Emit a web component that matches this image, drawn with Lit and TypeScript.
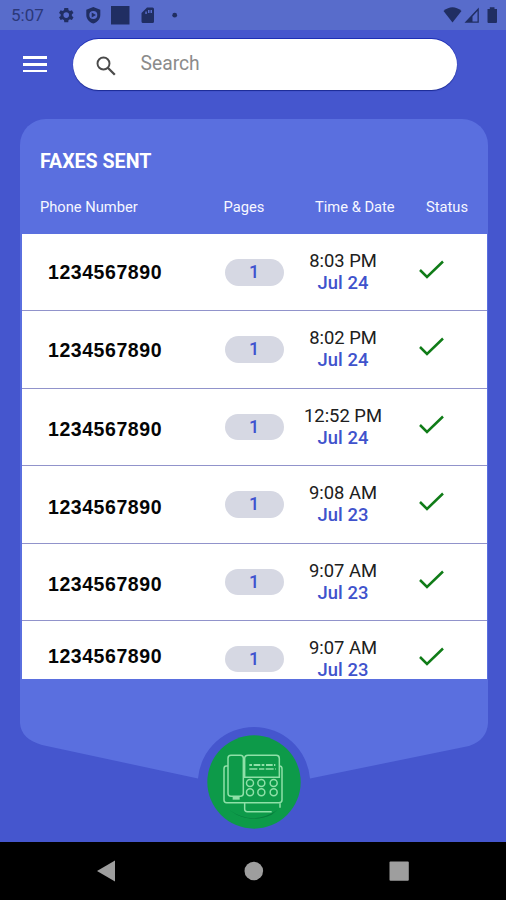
import { LitElement, html, css } from "lit";
import { customElement, property } from "lit/decorators.js";

interface Fax {
  phone: string;
  pages: number;
  time: string;
  date: string;
  shift: number;
}

const FAXES: Fax[] = [
  { phone: "1234567890", pages: 1, time: "8:03 PM", date: "Jul 24", shift: -0.5 },
  { phone: "1234567890", pages: 1, time: "8:02 PM", date: "Jul 24", shift: 0.5 },
  { phone: "1234567890", pages: 1, time: "12:52 PM", date: "Jul 24", shift: 1.5 },
  { phone: "1234567890", pages: 1, time: "9:08 AM", date: "Jul 23", shift: 2.5 },
  { phone: "1234567890", pages: 1, time: "9:07 AM", date: "Jul 23", shift: 2.2 },
  { phone: "1234567890", pages: 1, time: "9:07 AM", date: "Jul 23", shift: -3 },
];

@customElement("fax-row")
class FaxRow extends LitElement {
  @property({ attribute: false }) fax!: Fax;

  static styles = css`
    :host {
      display: grid;
      grid-template-columns: 203px 60px 116px 1fr;
      height: 77.4px;
      flex: none;
      box-sizing: border-box;
      border-bottom: 1.5px solid #9193cb;
      background: #fff;
      font-family: Roboto, sans-serif;
    }
    .phone {
      padding: 27px 0 0 26.5px;
      font: bold 19.5px/22px "Liberation Sans", sans-serif;
      letter-spacing: 0.56px;
      color: #050505;
    }
    .pill {
      margin-top: 25px;
      height: 26.5px;
      width: 59px;
      border-radius: 14px;
      background: #d6d8e3;
      color: #4052cf;
      font-weight: 500;
      font-size: 18px;
      line-height: 26px;
      text-align: center;
    }
    .when {
      padding: 16px 0 0 1px;
      text-align: center;
      font-size: 18.4px;
      line-height: 22px;
      color: #202020;
    }
    .date {
      color: #4052cc;
      font-weight: 500;
      letter-spacing: 0.1px;
    }
    .check {
      display: block;
      margin: 26px 0 0 17.5px;
    }
  `;

  render() {
    return html`
      <div class="phone" style="transform: translateY(${this.fax.shift}px)">${this.fax.phone}</div>
      <div class="pill">${this.fax.pages}</div>
      <div class="when">
        <div>${this.fax.time}</div>
        <div class="date">${this.fax.date}</div>
      </div>
      <svg class="check" width="28" height="20" viewBox="0 0 28 20" fill="none">
        <path d="M2 10L9 17L25 1.500" stroke="#107c18" stroke-width="2.500" />
      </svg>
    `;
  }
}

@customElement("app-root")
class AppRoot extends LitElement {
  static styles = css`
    :host {
      display: flex;
      flex-direction: column;
      width: 506px;
      height: 900px;
      overflow: hidden;
      background: #4556ce;
      font-family: Roboto, sans-serif;
      color: #fff;
    }
    .status {
      display: flex;
      align-items: center;
      height: 30px;
      flex: none;
      background: #586ccb;
      color: #2b3879;
    }
    .clock {
      width: 46px;
      padding-left: 11px;
      font-size: 17px;
      line-height: 31px;
    }
    .status svg {
      display: block;
    }
    .top {
      display: flex;
      height: 89px;
      flex: none;
    }
    .menu {
      display: flex;
      flex-direction: column;
      gap: 4px;
      margin: 26px 26px 0 23px;
      width: 23.5px;
    }
    .menu i {
      height: 2.8px;
      background: #fff;
    }
    .search {
      display: flex;
      box-sizing: border-box;
      margin-top: 9px;
      width: 384px;
      height: 51px;
      border-radius: 26px;
      background: #fff;
      box-shadow: 0 -1px 0.5px #1d2eb5, 0 1px 1px #1a2a94;
    }
    .search svg {
      margin: 17px 0 0 23px;
      flex: none;
    }
    .search span {
      margin: 13px 0 0 24px;
      color: #8b8b8b;
      font-size: 19.3px;
      line-height: 24px;
    }
    .card {
      display: flex;
      flex-direction: column;
      width: 468px;
      height: 560px;
      margin-left: 20px;
      flex: none;
      border-radius: 26px 26px 0 0;
      background: #5a6fdf;
    }
    .title {
      padding: 31px 0 0 20px;
      height: 44px;
      font-size: 19.6px;
      line-height: 24px;
      font-weight: 700;
    }
    .heads {
      display: grid;
      grid-template-columns: 183.5px 91.5px 111px 1fr;
      padding: 3px 0 0 20px;
      height: 40px;
      box-sizing: border-box;
      font-size: 14.7px;
      line-height: 20px;
      color: #f6f7ff;
      flex: none;
    }
    .rows {
      display: flex;
      flex-direction: column;
      margin: 0 1px 0 1.5px;
      height: 445px;
      overflow: hidden;
      flex: none;
      background: #fff;
    }
    .foot {
      position: relative;
      height: 163px;
      flex: none;
    }
    .foot svg {
      display: block;
    }
    .fax {
      position: absolute;
      left: 207px;
      top: 56px;
    }
    .nav {
      height: 58px;
      flex: none;
      background: #000;
    }
    .nav svg {
      display: block;
    }
  `;

  render() {
    return html`
      <div class="status">
        <span class="clock">5:07</span>
        <svg width="440" height="30" viewBox="57 0 440 30" fill="#202e62">
          <g transform="translate(56.3 5.5) scale(.8)">
            <path
              fill-rule="evenodd"
              d="M19.4 13c0-.3.1-.6.1-1s0-.7-.1-1l2.1-1.6-2-3.5-2.5 1c-.5-.4-1.1-.8-1.7-1L14.9 3H10l-.4 2.900c-.6.2-1.200.6-1.700 1l-2.500-1-2 3.500L5.500 11c0 .3-.1.7-.1 1s0 .7.1 1l-2.100 1.600 2 3.500 2.500-1c.5.4 1.100.8 1.700 1L10 21h4.900l.4-2.900c.6-.2 1.200-.6 1.700-1l2.500 1 2-3.500zM12.400 15.500a3.500 3.500 0 1 1 0-7 3.500 3.500 0 0 1 0 7z"
            />
          </g>
          <path
            fill-rule="evenodd"
            d="M93.300 7L100.300 9.700V15C100.300 19 97.500 22.200 93.300 23.500C89.100 22.200 86.300 19 86.300 15V9.700ZM93.300 11A4 4 0 1 0 93.300 19A4 4 0 1 0 93.300 11ZM91.700 12.500L96 15L91.700 17.500Z"
          />
          <path d="M111 6H129.500V24.500H111Z" />
          <path
            fill-rule="evenodd"
            d="M147 7.500H152.500Q154 7.500 154 9V21.500Q154 23 152.500 23H143Q141.500 23 141.500 21.500V13ZM145.300 11.500V14H146.800V11.500ZM148 10V13H149.500V10ZM150.500 10V13H152V10Z"
          />
          <circle cx="174.700" cy="15.200" r="2.400" />
          <path d="M443.500 11Q452.500 3.500 461.500 11L452.500 22.500Z" />
          <path fill-rule="evenodd" d="M464.500 22.800L478.800 7.500V22.800ZM472.500 21.500H477.500V11L472.500 16.500Z" />
          <path d="M487.500 9H489.800V7.300H494.500V9H497V22Q497 23 496 23H488.500Q487.500 23 487.500 22Z" />
        </svg>
      </div>
      <div class="top">
        <div class="menu"><i></i><i></i><i></i></div>
        <div class="search">
          <svg width="21" height="21" viewBox="0 0 21 21" fill="none" stroke="#4a4a4a">
            <circle cx="7.500" cy="7.500" r="6" stroke-width="1.900" />
            <path d="M11.800 11.800L18.800 18.800" stroke-width="2.300" />
          </svg>
          <span>Search</span>
        </div>
      </div>
      <div class="card">
        <div class="title">FAXES SENT</div>
        <div class="heads">
          <span>Phone Number</span><span>Pages</span><span>Time &amp; Date</span><span>Status</span>
        </div>
        <div class="rows">${FAXES.map((f) => html`<fax-row .fax=${f}></fax-row>`)}</div>
      </div>
      <div class="foot">
        <svg width="506" height="163" viewBox="0 0 506 163">
          <path
            fill="#5a6fdf"
            d="M20 0H488V44Q487 61 469 67L310 99.500A56.200 56.200 0 0 0 198 99.500L42 66Q21 60 20 44Z"
          />
        </svg>
        <svg class="fax" width="94" height="94" viewBox="51 61 282 282" fill="none">
          <circle cx="192" cy="202" r="140" fill="#0d9a49" />
          <path d="M118 286Q190 335 262 286L245 300Q192 324 140 300Z" fill="#077d3d" />
          <g stroke="#8fe0a8" stroke-width="4.500">
            <rect x="114" y="122" width="46" height="123" rx="9" />
            <path d="M114 154H109Q102 154 102 162V256Q102 264 110 264H267Q276 264 276 256V162Q276 154 268 154" />
            <path d="M164 188V132Q164 122 174 122H259Q268 122 268 132V188Z" />
            <path d="M164 264V284Q164 291 172 291H245M270 266V279" />
            <circle cx="180" cy="205" r="10.500" />
            <circle cx="214" cy="205" r="10.500" />
            <circle cx="251" cy="205" r="10.500" />
            <circle cx="180" cy="233" r="10.500" />
            <circle cx="214" cy="233" r="10.500" />
            <circle cx="251" cy="233" r="10.500" />
          </g>
          <path d="M128 251H149" stroke="#8fe0a8" stroke-width="8" />
          <path d="M178 151H256" stroke="#8fe0a8" stroke-width="6" stroke-dasharray="8 5 20 4" />
          <path d="M178 163H258" stroke="#8fe0a8" stroke-width="5" stroke-dasharray="24 5 16 4" />
        </svg>
      </div>
      <div class="nav">
        <svg width="506" height="58" viewBox="0 842 506 58" fill="#9e9e9e">
          <path d="M97 871L115 860.500V881.500Z" />
          <circle cx="253.800" cy="871" r="9.300" />
          <rect x="389.500" y="861.500" width="19.300" height="19.300" rx="1" />
        </svg>
      </div>
    `;
  }
}
